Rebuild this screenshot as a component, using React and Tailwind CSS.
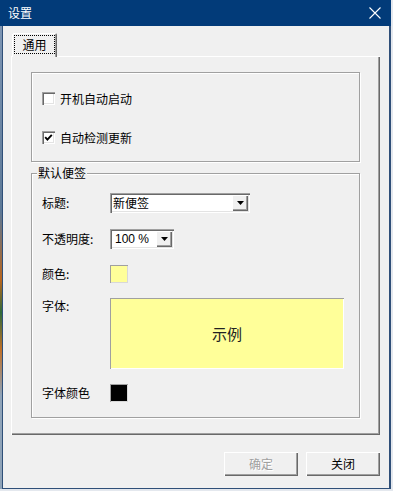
import React from "react";

const cjk = "font-['Noto_Sans_CJK_SC','Noto_Sans',sans-serif]";
const raised =
  "shadow-[inset_1px_1px_0_#ffffff,inset_-1px_-1px_0_#696969,inset_-2px_-2px_0_#a0a0a0]";
const sunken =
  "shadow-[inset_1px_1px_0_#a0a0a0,inset_2px_2px_0_#696969,inset_-1px_-1px_0_#ffffff,inset_-2px_-2px_0_#e3e3e3]";

function CheckBox({ checked, label }) {
  return (
    <div className="flex items-center h-[13px]">
      <div className={`w-[13px] h-[13px] bg-white shrink-0 flex items-center justify-center ${sunken}`}>
        {checked && (
          <svg width="13" height="13" viewBox="0 0 13 13">
            <path d="M3.2 6.2 L5.4 8.6 L9.8 3.8" fill="none" stroke="#000" strokeWidth="1.9" />
          </svg>
        )}
      </div>
      <span className="ml-[5px] text-[12px] leading-[14px] text-black">{label}</span>
    </div>
  );
}

function DropBtn() {
  return (
    <div className={`w-[16px] h-full bg-[#f0f0f0] flex items-center justify-center ${raised}`}>
      <svg width="7" height="4" viewBox="0 0 7 4">
        <path d="M0 0 H7 L3.5 4 Z" fill="#000" />
      </svg>
    </div>
  );
}

function Combo({ width, text, latin }) {
  return (
    <div className={`h-[20px] bg-white flex p-[2px] ${sunken}`} style={{ width }}>
      <div
        className={`flex-1 flex items-center pl-[1px] text-[12px] leading-[14px] text-black ${
          latin ? "font-['Liberation_Sans',sans-serif] pl-[3px]" : ""
        }`}
      >
        {text}
      </div>
      <DropBtn />
    </div>
  );
}

function Swatch({ color }) {
  return (
    <div
      className={`w-[18px] h-[18px] ${color} shadow-[inset_1px_1px_0_#a0a0a0,inset_-1px_-1px_0_#d8d8d8]`}
    />
  );
}

function Label({ children }) {
  return <div className="w-[68px] shrink-0 text-[12px] leading-[14px] text-black">{children}</div>;
}

export default function App() {
  return (
    <div className={`w-[393px] h-[491px] bg-[#e4e8ee] flex flex-col ${cjk}`}>
      {/* title bar */}
      <div className="w-[391px] h-[26px] shrink-0 bg-[#023b79] flex items-center justify-between pl-[8px] pr-[9px]">
        <span className="text-white text-[12px] leading-[14px]">设置</span>
        <svg width="12" height="12" viewBox="0 0 12 12" className="mr-[1px]">
          <path d="M0.5 0.5 L11.5 11.5 M11.5 0.5 L0.5 11.5" stroke="#ffffff" strokeWidth="1.1" />
        </svg>
      </div>
      <div className="flex w-[391px] h-[462px] shrink-0">
        <div className="w-[2px] h-full bg-[linear-gradient(to_bottom,#7d95b3_0%,#5c7896_40%,#b8661e_55%,#2f6a3a_62%,#c07028_70%,#8fa3b8_80%,#8fa3b8_100%)]" />
        <div className="w-[1px] h-full bg-[#2f4f78]" />
        {/* body */}
        <div className="w-[386px] h-full bg-[#f0f0f0] flex flex-col pt-[7px] pl-[8px]">
          {/* tab */}
          <div className="flex pl-[1px] relative z-10 -mb-[1px]">
            <div className="w-[45px] h-[24px] bg-[#f0f0f0] rounded-t-[2px] shadow-[inset_1px_1px_0_#ffffff,inset_-1px_0_0_#696969,inset_-2px_0_0_#a0a0a0] pt-[2px] pl-[2px]">
              <div className="w-[41px] h-[19px] border border-dotted border-black flex items-center justify-center text-[12px] leading-[14px] text-black">
                通用
              </div>
            </div>
          </div>
          {/* panel */}
          <div className={`w-[369px] h-[379px] shrink-0 bg-[#f0f0f0] px-[20px] pt-[16px] ${raised}`}>
            {/* group 1 */}
            <div className="h-[90px] border border-[#a0a0a0] shadow-[inset_1px_1px_0_#ffffff,1px_1px_0_#ffffff] pt-[19px] pl-[10px] flex flex-col">
              <CheckBox label="开机自动启动" />
              <div className="h-[26px]" />
              <CheckBox checked label="自动检测更新" />
            </div>
            {/* group 2 */}
            <div className="relative mt-[11px] h-[245px] border border-[#a0a0a0] shadow-[inset_1px_1px_0_#ffffff,1px_1px_0_#ffffff] pt-[19px] pl-[10px] flex flex-col">
              <span className="absolute -top-[8px] left-[5px] px-[1px] bg-[#f0f0f0] text-[12px] leading-[14px] text-black">
                默认便签
              </span>
              <div className="flex items-center h-[20px]">
                <Label>标题:</Label>
                <Combo width={140} text="新便签" />
              </div>
              <div className="flex items-center h-[20px] mt-[16px]">
                <Label>不透明度:</Label>
                <Combo width={64} text="100 %" latin />
              </div>
              <div className="flex items-center h-[18px] mt-[16px]">
                <Label>颜色:</Label>
                <Swatch color="bg-[#ffff99]" />
              </div>
              <div className="flex items-start mt-[15px]">
                <div className="pt-[1px]">
                  <Label>字体:</Label>
                </div>
                <div className="w-[234px] h-[71px] bg-[#ffff99] shadow-[inset_1px_1px_0_#a0a0a0,inset_-1px_-1px_0_#ffffff] flex items-center justify-center text-[15px] leading-[18px] text-[#222]">
                  示例
                </div>
              </div>
              <div className="flex items-center h-[18px] mt-[15px]">
                <Label>字体颜色</Label>
                <Swatch color="bg-black" />
              </div>
            </div>
          </div>
          {/* buttons */}
          <div className="w-[369px] flex justify-end gap-[8px] mt-[17px]">
            <div className={`w-[74px] h-[24px] bg-[#f0f0f0] flex items-center justify-center text-[12px] leading-[14px] text-[#a0a0a0] [text-shadow:1px_1px_0_#ffffff] ${raised}`}>
              确定
            </div>
            <div className={`w-[74px] h-[24px] bg-[#f0f0f0] flex items-center justify-center text-[12px] leading-[14px] text-black ${raised}`}>
              关闭
            </div>
          </div>
        </div>
        <div className="w-[2px] h-full bg-[#2f4f78]" />
      </div>
      <div className="w-[391px] h-[1px] shrink-0 flex">
        <div className="w-[2px] h-full bg-[#8fa3b8]" />
        <div className="w-[389px] h-full bg-[#2f4f78]" />
      </div>
    </div>
  );
}
